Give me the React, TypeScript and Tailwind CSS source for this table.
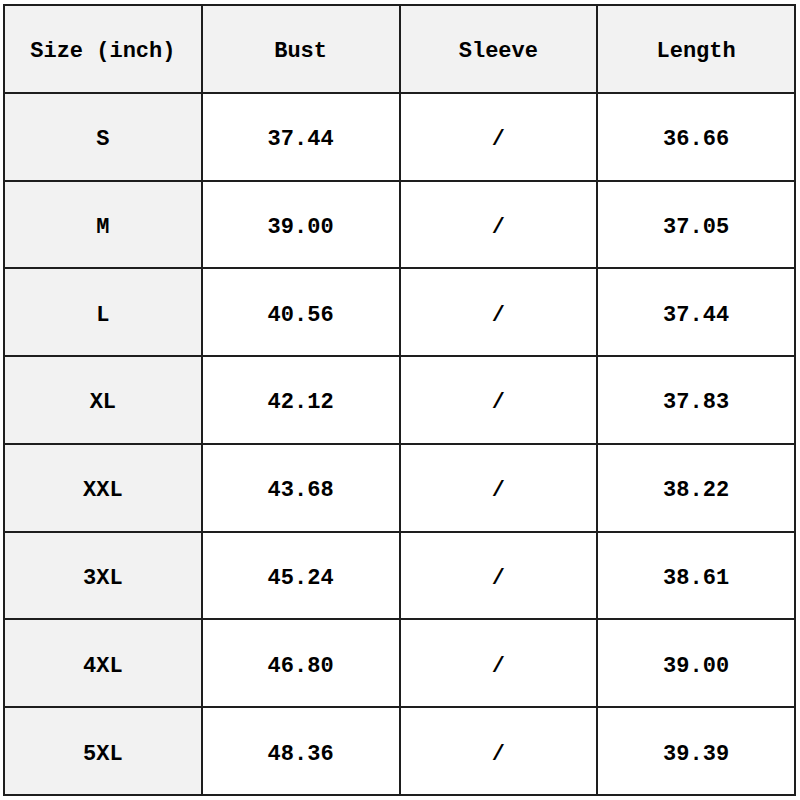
import React from "react";

const rows: [string, string, string, string][] = [
  ["S", "37.44", "/", "36.66"],
  ["M", "39.00", "/", "37.05"],
  ["L", "40.56", "/", "37.44"],
  ["XL", "42.12", "/", "37.83"],
  ["XXL", "43.68", "/", "38.22"],
  ["3XL", "45.24", "/", "38.61"],
  ["4XL", "46.80", "/", "39.00"],
  ["5XL", "48.36", "/", "39.39"],
];

export default function App() {
  const header = ["Size (inch)", "Bust", "Sleeve", "Length"];
  return (
    <div className="w-[800px] h-[800px] bg-white pt-[4px] pl-[3px]">
      <div
        className="w-[793px] h-[792px] grid grid-cols-4 grid-rows-9 gap-[2px] p-[2px] bg-[#1e1e1e] text-[22px] font-bold text-black"
        style={{ fontFamily: '"Liberation Mono", "DejaVu Sans Mono", monospace' }}
      >
        {header.map((h, i) => (
          <div key={i} className="bg-[#f2f2f2] flex items-center justify-center pt-[6px]">
            {h}
          </div>
        ))}
        {rows.map((r, ri) =>
          r.map((c, ci) => (
            <div
              key={`${ri}-${ci}`}
              className={`${ci === 0 ? "bg-[#f2f2f2]" : "bg-white"} flex items-center justify-center pt-[6px]`}
            >
              {c}
            </div>
          ))
        )}
      </div>
    </div>
  );
}
